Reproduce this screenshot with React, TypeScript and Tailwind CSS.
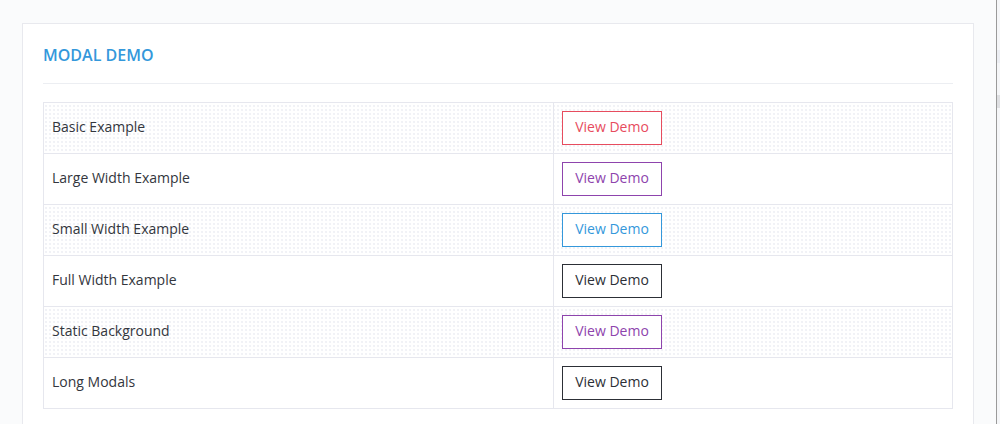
import React from 'react';

interface DemoRow {
    label: string;
    btn: string;
}

const rows: DemoRow[] = [
    { label: 'Basic Example', btn: 'border-[#e74c5e] text-[#e74c5e]' },
    { label: 'Large Width Example', btn: 'border-[#8e44ad] text-[#8e44ad]' },
    { label: 'Small Width Example', btn: 'border-[#3498db] text-[#3498db]' },
    { label: 'Full Width Example', btn: 'border-[#2c2f36] text-[#2c2f36]' },
    { label: 'Static Background', btn: 'border-[#8e44ad] text-[#8e44ad]' },
    { label: 'Long Modals', btn: 'border-[#2c2f36] text-[#2c2f36]' },
];

const App: React.FC = () => {
    return (
        <div className="relative flex h-[424px] w-[1000px] overflow-hidden bg-[#fafbfc] font-['Open_Sans',sans-serif]">
            <div className="flex-1 pl-[22px] pt-[23px] pr-[22px]">
                {/* Card */}
                <div className="h-[420px] border border-[#e8e9ee] bg-white px-5 pt-[19px]">
                    <h4 className="border-b border-[#eceef2] pb-4 text-base font-semibold leading-6 text-[#3498db]">
                        MODAL DEMO
                    </h4>

                    <table className="mt-[18px] w-full border-collapse border border-[#e6e7ee] text-sm text-[#33363d]">
                        <tbody>
                            {rows.map((row, i) => (
                                <tr
                                    key={row.label}
                                    className={`border-t border-[#e6e7ee] ${i % 2 === 0 ? 'bg-[radial-gradient(circle,#f1f2f6_0.7px,transparent_1px)] bg-[length:4px_4px]' : ''}`}
                                >
                                    <td className="h-[51px] w-[510px] border-r border-[#e6e7ee] px-2 pb-[2px] align-middle">
                                        {row.label}
                                    </td>
                                    <td className="h-[51px] px-2 align-middle">
                                        <button className={`flex h-[34px] w-[100px] items-center justify-center border bg-white pb-[2px] text-sm font-medium ${row.btn}`}>
                                            View Demo
                                        </button>
                                    </td>
                                </tr>
                            ))}
                        </tbody>
                    </table>
                </div>
            </div>

            {/* edge of neighbouring scrollbar */}
            <div className="flex w-[4px] flex-col border-l border-[#9a9a9a] bg-[#f5f6f8]">
                <div className="mt-[50px] h-[13px] bg-[#eceef3]" />
                <div className="mt-[32px] h-[13px] bg-[#dfe0e3]" />
            </div>
        </div>
    );
};

export default App;
